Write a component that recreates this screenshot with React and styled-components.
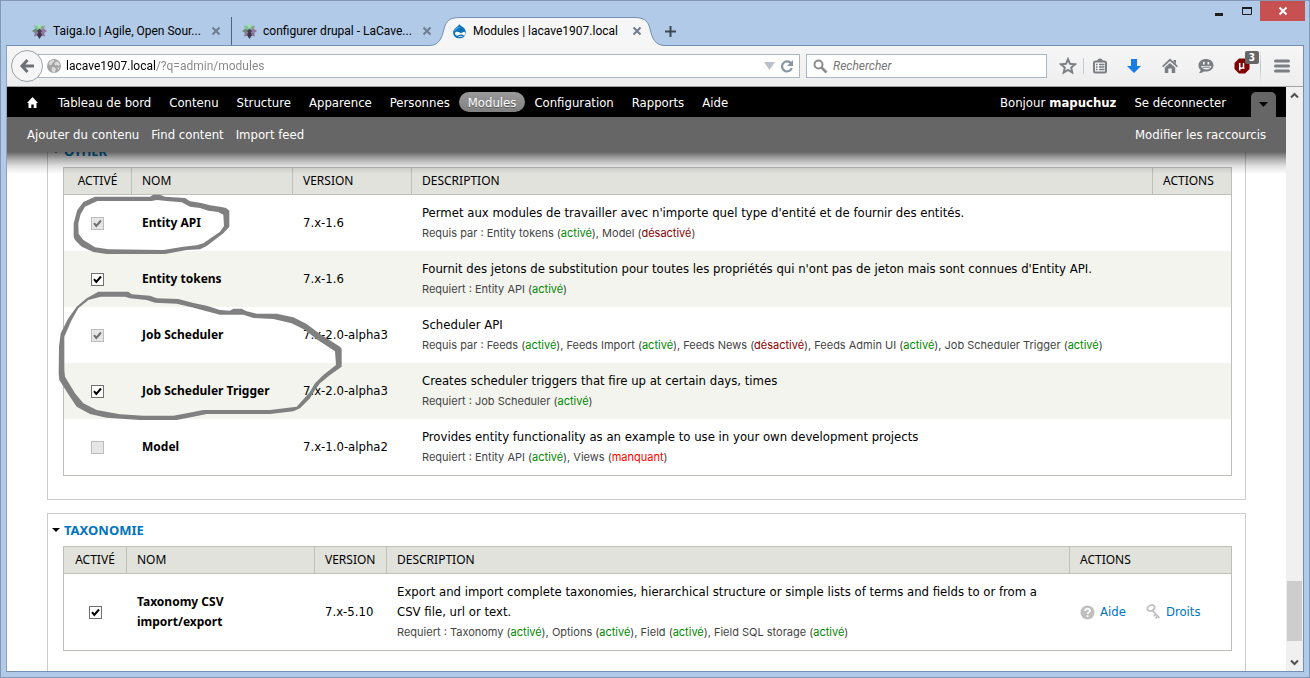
import React from "react";
import styled, { createGlobalStyle, css } from "styled-components";

const chromeFont = `Roboto, "Open Sans", sans-serif`;
const headingFont = `"Noto Sans", "Open Sans", sans-serif`;
const bodyFont = `"DejaVu Sans Condensed", "DejaVu Sans", sans-serif`;
const noteFont = `Inter, "Noto Sans", sans-serif`;

const GlobalStyle = createGlobalStyle`
  *, *::before, *::after { box-sizing: border-box; }
  html, body { margin: 0; padding: 0; height: 100%; overflow: hidden; }
  body { font-family: ${bodyFont}; font-size: 13px; color: #000; }
  button { font: inherit; border: 0; padding: 0; background: none; color: inherit; }
  a { color: inherit; text-decoration: none; }
  svg { display: block; flex: none; }
`;

/* ---------- Browser window ---------- */

const Shell = styled.div`
  display: flex;
  flex-direction: column;
  height: 100vh;
  padding: 0 5px 5px;
  border: 1px solid #8498b6;
  background: #b0cae8;
`;

const TitleBar = styled.header`
  display: flex;
  justify-content: space-between;
  height: 44px;
  flex: none;
  margin-right: -1px;
  font-family: ${chromeFont};
`;

const TabStrip = styled.div`
  display: flex;
  align-items: flex-end;
  padding-left: 16px;
`;

const Tab = styled.div`
  position: relative;
  display: flex;
  align-items: center;
  width: 210px;
  height: 28px;
  padding: 0 10px;
  font-size: 12px;
  border-right: ${(p) => (p.$divided ? "1px solid #51647d" : "0")};
`;

const TabShape = styled.svg`
  position: absolute;
  left: -12px;
  top: 0;
  z-index: 0;
`;

const TabLink = styled.a`
  position: relative;
  display: flex;
  align-items: center;
  gap: 6px;
  flex: 1;
  min-width: 0;
  white-space: nowrap;
`;

const TabClose = styled.button`
  position: relative;
  width: 10px;
  height: 10px;
`;

const NewTab = styled.button`
  display: grid;
  place-items: center;
  width: 36px;
  height: 28px;
`;

const WindowControls = styled.div`
  display: flex;
  align-items: flex-start;
`;

const WindowButton = styled.button`
  display: grid;
  place-items: center;
  width: ${(p) => (p.$danger ? 45 : 27)}px;
  height: 20px;
  background: ${(p) => (p.$danger ? "#c75050" : "transparent")};
`;

const Frame = styled.div`
  display: flex;
  flex-direction: column;
  flex: 1;
  min-height: 0;
  border: 1px solid #7590b0;
  border-left-color: #8ba3c2;
  background: #fff;
`;

const NavBar = styled.div`
  display: flex;
  align-items: center;
  height: 41px;
  flex: none;
  padding-left: 4px;
  border-bottom: 1px solid #a3a3a3;
  background: linear-gradient(#f6f6f6, #eee);
  font-family: ${chromeFont};
  font-size: 12px;
`;

const BackButton = styled.button`
  position: relative;
  z-index: 1;
  display: grid;
  place-items: center;
  width: 32px;
  height: 32px;
  border: 1px solid #9da3aa;
  border-radius: 50%;
  background: #f6f6f6;
`;

const Field = styled.label`
  display: flex;
  align-items: center;
  gap: 5px;
  height: 24px;
  border: 1px solid #aab6c3;
  background: #fff;
  ${(p) =>
    p.$wide
      ? css`
          flex: 1;
          margin-left: -5px;
          padding: 0 5px 0 8px;
        `
      : css`
          width: 241px;
          margin: 0 6px;
          padding: 0 6px;
        `}
`;

const FieldInput = styled.input`
  flex: 1;
  min-width: 0;
  height: 20px;
  padding: 0;
  border: 0;
  outline: 0;
  background: none;
  font: inherit;
  &::placeholder {
    color: #777;
    font-style: italic;
    opacity: 1;
  }
`;

const UrlInput = styled(FieldInput)`
  color: transparent;
  background: linear-gradient(90deg, #000 90px, #858585 90px);
  background-clip: text;
  -webkit-background-clip: text;
`;

const Tools = styled.div`
  display: flex;
  align-items: center;
`;

const toolWidths = { narrow: 30, medium: 32, wide: 42 };

const ToolButton = styled.button`
  position: relative;
  display: grid;
  place-items: center;
  width: ${(p) => toolWidths[p.$size] || 36}px;
  height: 30px;
`;

const Divider = styled.span`
  width: 1px;
  height: ${(p) => (p.$tall ? 36 : 16)}px;
  background: ${(p) => (p.$tall ? "linear-gradient(transparent, #b4bfcb, transparent)" : "#c3cbd3")};
`;

const Count = styled.span`
  position: absolute;
  top: 0;
  right: 1px;
  width: 14px;
  height: 13px;
  border-radius: 2px;
  background: #666;
  color: #fff;
  font: bold 10px/13px ${bodyFont};
  text-align: center;
`;

const Viewport = styled.div`
  display: flex;
  flex: 1;
  min-height: 0;
`;

const Page = styled.div`
  position: relative;
  flex: 1;
  min-width: 0;
  overflow: hidden;
`;

const ScrollBar = styled.div`
  display: flex;
  flex-direction: column;
  align-items: center;
  width: 17px;
  background: #f0f0f0;
`;

const ScrollArrow = styled.button`
  display: grid;
  place-items: center;
  width: 17px;
  height: 17px;
`;

const TrackSpace = styled.div`
  flex: ${(p) => p.$share};
`;

const Thumb = styled.div`
  width: 15px;
  height: 60px;
  background: #cdcdcd;
`;

/* ---------- Administration toolbar ---------- */

const AdminToolbar = styled.div`
  position: absolute;
  inset: 0 0 auto;
  z-index: 2;
  font-size: 13px;
  color: #fff;
`;

const MenuBar = styled.nav`
  display: flex;
  justify-content: space-between;
  height: 30px;
  padding: 0 10px;
  background: #000;
`;

const ShortcutBar = styled.nav`
  display: flex;
  justify-content: space-between;
  align-items: center;
  height: 35px;
  padding: 0 20px;
  background: #666;
`;

const ShadowEdge = styled.div`
  height: 22px;
  background: linear-gradient(rgba(0, 0, 0, 0.6), rgba(0, 0, 0, 0.33) 7px, rgba(0, 0, 0, 0.12) 14px, transparent);
  pointer-events: none;
`;

const LinkGroup = styled.div`
  display: flex;
  align-items: center;
  gap: ${(p) => p.$gap || 0}px;
`;

const MenuLink = styled.a`
  display: flex;
  align-items: center;
  gap: 4px;
  height: 20px;
  padding: 0 9px;
  border-radius: 10px;
  ${(p) =>
    p.$active &&
    css`
      background: linear-gradient(#9a9a9a, #808080);
      text-shadow: 0 1px 0 #555;
    `}
`;

const HomeLink = styled(MenuLink)`
  padding: 0 11px 0 10px;
`;

const DrawerToggle = styled.button`
  align-self: flex-end;
  display: grid;
  place-items: center;
  width: 25px;
  height: 25px;
  margin-left: 16px;
  border-radius: 5px 5px 0 0;
  background: #666;
`;

/* ---------- Module list ---------- */

const Main = styled.main`
  padding: 47px 40px 0;
`;

const Package = styled.section`
  position: relative;
  margin-bottom: 13px;
  padding: 0 13px 23px 15px;
  border: 1px solid #ccc;
`;

const PackageTitle = styled.h2`
  height: 32px;
  margin: 0 0 0 -11px;
  font: bold 13px/32px ${headingFont};
  text-transform: uppercase;
  color: #0074bd;
  a {
    display: flex;
    align-items: center;
    gap: 4px;
  }
`;

const ModuleTable = styled.table`
  width: 100%;
  table-layout: fixed;
  border-collapse: separate;
  border-spacing: 0;
  border: 1px solid #bebfb9;
  line-height: 20px;
`;

const HeadCell = styled.th`
  height: 27px;
  padding: 0 10px;
  border-bottom: 1px solid #bebfb9;
  border-right: 1px solid #bebfb9;
  background: #e1e2dc;
  font-family: ${headingFont};
  font-size: 12px;
  font-weight: normal;
  text-align: ${(p) => (p.$center ? "center" : "left")};
  text-transform: uppercase;
  &:last-child {
    border-right: 0;
  }
  &:first-child {
    padding: 0;
  }
`;

const Row = styled.tr`
  &:nth-child(even) {
    background: #f3f4ee;
  }
`;

const Cell = styled.td`
  padding: 8px 10px;
  vertical-align: middle;
  overflow-wrap: break-word;
`;

const TickCell = styled(Cell)`
  padding: 0 1px 0 0;
`;

const ModuleName = styled.label`
  font: bold 12px/20px ${headingFont};
`;

const Requirement = styled.div`
  font-family: ${noteFont};
  font-size: 11px;
  line-height: 20px;
  color: #444;
`;

const stateColors = { "activé": "#080", "désactivé": "#800", manquant: "#f00" };

const State = styled.span`
  color: ${(p) => stateColors[p.$state]};
`;

const Tick = styled.span`
  display: grid;
  width: 13px;
  height: 13px;
  margin: 0 auto;
  > * {
    grid-area: 1 / 1;
  }
  svg {
    pointer-events: none;
  }
`;

const TickInput = styled.input`
  appearance: none;
  width: 13px;
  height: 13px;
  margin: 0;
  border: 1px solid #707070;
  background: #fff;
  &:disabled {
    border-color: #bcbcbc;
    background: #e6e6e6;
  }
`;

const Actions = styled.div`
  display: flex;
  gap: 20px;
  color: #0074bd;
  a {
    display: flex;
    align-items: center;
    gap: 5px;
  }
`;

const PenMarks = styled.svg`
  position: absolute;
  left: -8px;
  top: 55px;
  pointer-events: none;
`;

/* ---------- Icons ---------- */

const TaigaIcon = () => (
  <svg width="15" height="16" viewBox="0 0 15 16">
    <path d="M7.5 0 10 3.5 7.5 7 5 3.5z" fill="#9fe3ad" />
    <path d="M2 2.5 6 3.2 7 7 3 6z" fill="#7fc690" />
    <path d="M13 2.5 9 3.2 8 7 12 6z" fill="#8fa58f" />
    <path d="M0 8 3.6 5.6 7.5 8 3.6 10.4z" fill="#6f8a77" />
    <path d="M15 8 11.4 5.6 7.5 8 11.4 10.4z" fill="#9277a0" />
    <path d="M2 13.5 3 9.6 7 9 6 12.6z" fill="#8c7b9b" />
    <path d="M13 13.5 12 9.6 8 9 9 12.6z" fill="#8b719b" />
    <path d="M7.5 16 10 12 7.5 7 5 12z" fill="#3c3648" />
    <path d="M7.5 5.5 10 8 7.5 11 5 8z" fill="#453f55" />
  </svg>
);

const DrupalIcon = () => (
  <svg width="15" height="16" viewBox="0 0 16 16">
    <path d="M7.6.3C8 1.8 9.4 2.4 10.8 3.3 13.3 4.9 14.8 7 14.8 9.6c0 3.700-3 6.200-6.800 6.200S1.200 13.200 1.200 9.500c0-2.900 1.900-4.600 3.900-5.900C6.500 2.700 7.500 2 7.600.3z" fill="#0a72b8" />
    <path d="M3 5.500C4.600 3.600 7 4 9.500 3.500 6.500 6 3.500 6.500 2 9c-.3-1.500.2-2.600 1-3.500z" fill="#4ba0d8" />
    <path d="M5.700 8.700c2 0 3 1.500 4 1.500s2-1.400 3.200-1.400c1 0 1.500 1 1.500 2s-.7 2-1.700 2-2-1.300-3.100-1.300-1.900 1.300-3.600 1.300-2.800-.9-2.800-2.200.9-1.900 2.500-1.900z" fill="#fff" />
    <path d="M7 14.300c1.500-.8 3-.8 4.200-.1" stroke="#fff" fill="none" />
  </svg>
);

const CrossIcon = ({ color = "#6f7d8c" }) => (
  <svg width="10" height="10" viewBox="0 0 10 10">
    <path d="M1.500 1.500l7 7M8.500 1.500l-7 7" stroke={color} strokeWidth="2" />
  </svg>
);

const GlobeIcon = () => (
  <svg width="14" height="14" viewBox="0 0 14 14">
    <circle cx="7" cy="7" r="7" fill="#a3a3a3" />
    <path d="M1.500 4.500 4 1.600 7 1l.5 1.500-2 1L5 5.500 3 6.500zM8.500 3l2.500-.5 2 3-1 1.500-2-1-2 .5-.5-1.800zM5 8l3 .5 1 2-1.500 3h-1.500L4.500 11zM10.500 8.500l2 0-1.500 3z" fill="#dcdcdc" />
  </svg>
);

const StarIcon = () => (
  <svg width="18" height="18" viewBox="0 0 18 18">
    <path d="M9 2.200l2 4.600 5 .5-3.800 3.300 1.100 4.900L9 13l-4.300 2.500 1.100-4.900L2 7.300l5-.5z" fill="none" stroke="#7b7f84" strokeWidth="2" />
  </svg>
);

const ListIcon = () => (
  <svg width="16" height="16" viewBox="0 0 16 16">
    <path d="M4.500 3C5.500 2.500 6 .5 8 .5s2.500 2 3.500 2.500z" fill="#7b7f84" />
    <rect x="2" y="3.500" width="12" height="11" rx="1.500" fill="none" stroke="#7b7f84" strokeWidth="2" />
    <path d="M4 6.500h1.500M7 6.500h5.500M4 9h1.500M7 9h5.500M4 11.500h1.500M7 11.500h5.500" stroke="#7b7f84" strokeWidth="1.400" />
  </svg>
);

const DownloadIcon = () => (
  <svg width="16" height="16" viewBox="0 0 16 16">
    <path d="M5 1h6v7h4l-7 7-7-7h4z" fill="#177ee6" />
  </svg>
);

const HomeIcon = () => (
  <svg width="16" height="16" viewBox="0 0 16 16">
    <path d="M.7 8.600 8 1.800l7.300 6.800" fill="none" stroke="#7b7f84" strokeWidth="1.800" />
    <path d="M11.500 2H14v4l-2.500-2.200zM2.800 9.500 8 4.900 13.200 9.500V15H9.700v-4.500H6.300V15H2.800z" fill="#7b7f84" />
  </svg>
);

const ChatIcon = () => (
  <svg width="16" height="16" viewBox="0 0 16 16">
    <path d="M8 1c4.400 0 7.500 2.700 7.500 6.300S12.400 13.600 8 13.600c-.8 0-1.500 0-2.200-.2C4.600 14.700 2.800 15 1 15c1-.8 1.600-1.800 1.500-2.900C1.300 11 .5 9.300.5 7.300.5 3.700 3.600 1 8 1z" fill="#7b7f84" />
    <path d="M5 4h1.700v2.500H5zM9.500 4h1.700v2.500H9.500zM3 8h10.500c-.5 2.300-2.600 3.500-5 3.500S3.500 10.300 3 8z" fill="#f2f2f2" />
    <path d="M4.500 9.300h7.500" stroke="#7b7f84" />
  </svg>
);

const BlockerIcon = () => (
  <svg width="16" height="16" viewBox="0 0 16 16">
    <path d="M5 .5h6L15.500 5v6L11 15.500H5L.5 11V5z" fill="#800000" />
    <path d="M5.700 12.500V5v3.500c0 2.300 3.800 2.300 3.800 0V5v4.500c0 .6.400.9 1 .8" fill="none" stroke="#fff" strokeWidth="1.500" />
  </svg>
);

const MenuIcon = () => (
  <svg width="16" height="14" viewBox="0 0 16 14">
    <path d="M1.500 2h13M1.500 7h13M1.500 12h13" stroke="#7b7f84" strokeWidth="3" strokeLinecap="round" />
  </svg>
);

const TriangleDown = ({ width = 9, height = 5, color = "#000" }) => (
  <svg width={width} height={height} viewBox="0 0 10 6" preserveAspectRatio="none">
    <path d="M0 0h10L5 6z" fill={color} />
  </svg>
);

const Chevron = ({ up }) => (
  <svg width="9" height="7" viewBox="0 0 9 7">
    <path d={up ? "M1 5.500 4.500 2 8 5.500" : "M1 1.500 4.500 5 8 1.500"} fill="none" stroke="#505050" strokeWidth="2" />
  </svg>
);

const HelpIcon = () => (
  <svg width="15" height="15" viewBox="0 0 15 15">
    <circle cx="7.500" cy="7.500" r="7" fill="#bfbfbf" />
    <path d="M5.200 6c0-3.200 4.800-3 4.700-.2 0 1.700-2.300 1.700-2.300 3.300M7.600 10.300v1.800" fill="none" stroke="#fff" strokeWidth="1.800" />
  </svg>
);

const KeyIcon = () => (
  <svg width="15" height="16" viewBox="0 0 15 16">
    <ellipse cx="5" cy="4" rx="3.700" ry="2.700" transform="rotate(-25 5 4)" fill="none" stroke="#bfbfbf" strokeWidth="1.800" />
    <path d="M6.500 6.500 13.500 14M9.500 14.500l2.500-3M7.800 12l2.200-2.200" fill="none" stroke="#bfbfbf" strokeWidth="1.800" />
  </svg>
);

/* ---------- Data ---------- */

const menuItems = ["Tableau de bord", "Contenu", "Structure", "Apparence", "Personnes", "Modules", "Configuration", "Rapports", "Aide"];
const shortcuts = ["Ajouter du contenu", "Find content", "Import feed"];

const ON = "activé";
const OFF = "désactivé";
const MISSING = "manquant";

const packages = [
  {
    title: "Other",
    widths: [68, 161, 119, null, 78],
    marked: true,
    modules: [
      { name: "Entity API", version: "7.x-1.6", checked: true, locked: true, text: "Permet aux modules de travailler avec n'importe quel type d'entité et de fournir des entités.", relation: "Requis par", links: [["Entity tokens", ON], ["Model", OFF]] },
      { name: "Entity tokens", version: "7.x-1.6", checked: true, text: "Fournit des jetons de substitution pour toutes les propriétés qui n'ont pas de jeton mais sont connues d'Entity API.", relation: "Requiert", links: [["Entity API", ON]] },
      { name: "Job Scheduler", version: "7.x-2.0-alpha3", checked: true, locked: true, text: "Scheduler API", relation: "Requis par", links: [["Feeds", ON], ["Feeds Import", ON], ["Feeds News", OFF], ["Feeds Admin UI", ON], ["Job Scheduler Trigger", ON]] },
      { name: "Job Scheduler Trigger", version: "7.x-2.0-alpha3", checked: true, text: "Creates scheduler triggers that fire up at certain days, times", relation: "Requiert", links: [["Job Scheduler", ON]] },
      { name: "Model", version: "7.x-1.0-alpha2", checked: false, locked: true, text: "Provides entity functionality as an example to use in your own development projects", relation: "Requiert", links: [["Entity API", ON], ["Views", MISSING]] },
    ],
  },
  {
    title: "Taxonomie",
    widths: [63, 188, 72, null, 161],
    modules: [
      { name: "Taxonomy CSV import/export", version: "7.x-5.10", checked: true, actions: true, text: "Export and import complete taxonomies, hierarchical structure or simple lists of terms and fields to or from a CSV file, url or text.", relation: "Requiert", links: [["Taxonomy", ON], ["Options", ON], ["Field", ON], ["Field SQL storage", ON]] },
    ],
  },
];

/* ---------- Parts ---------- */

function BrowserTab({ icon, title, active, divided }) {
  return (
    <Tab $divided={divided}>
      {active && (
        <TabShape width="234" height="29" viewBox="0 0 234 29">
          <path d="M0 28.500C9 28 12 21 14 12 16 3 21 .5 30 .5H204C213 .5 218 3 220 12 222 21 225 28 234 28.500V29H0z" fill="#f6f6f6" />
          <path d="M0 28.500C9 28 12 21 14 12 16 3 21 .5 30 .5H204C213 .5 218 3 220 12 222 21 225 28 234 28.500" fill="none" stroke="#7590b0" />
        </TabShape>
      )}
      <TabLink href="#">
        {icon}
        {title}
      </TabLink>
      <TabClose aria-label="Fermer l'onglet">
        <CrossIcon />
      </TabClose>
    </Tab>
  );
}

function ModuleRow({ module }) {
  const id = module.name.toLowerCase().replace(/[^a-z]+/g, "-");
  return (
    <Row>
      <TickCell>
        <Tick>
          <TickInput id={id} type="checkbox" defaultChecked={module.checked} disabled={module.locked} />
          {module.checked && (
            <svg width="13" height="13" viewBox="0 0 13 13">
              <path d="M3 6.200 5.300 9 10 3.500" fill="none" stroke={module.locked ? "#707070" : "#000"} strokeWidth="2" />
            </svg>
          )}
        </Tick>
      </TickCell>
      <Cell>
        <ModuleName htmlFor={id}>{module.name}</ModuleName>
      </Cell>
      <Cell>{module.version}</Cell>
      <Cell>
        {module.text}
        <Requirement>
          {module.relation} :{" "}
          {module.links.map(([name, state], i) => (
            <React.Fragment key={name}>
              {i > 0 && ", "}
              {name} (<State $state={state}>{state}</State>)
            </React.Fragment>
          ))}
        </Requirement>
      </Cell>
      <Cell>
        {module.actions && (
          <Actions>
            <a href="#"><HelpIcon />Aide</a>
            <a href="#"><KeyIcon />Droits</a>
          </Actions>
        )}
      </Cell>
    </Row>
  );
}

function ModulePackage({ pack }) {
  return (
    <Package>
      <PackageTitle>
        <a href="#">
          <TriangleDown width={8} height={4} />
          {pack.title}
        </a>
      </PackageTitle>
      <ModuleTable>
        <colgroup>
          {pack.widths.map((w, i) => (
            <col key={i} width={w || undefined} />
          ))}
        </colgroup>
        <thead>
          <tr>
            <HeadCell $center>Activé</HeadCell>
            <HeadCell>Nom</HeadCell>
            <HeadCell>Version</HeadCell>
            <HeadCell>Description</HeadCell>
            <HeadCell>Actions</HeadCell>
          </tr>
        </thead>
        <tbody>
          {pack.modules.map((m) => (
            <ModuleRow key={m.name} module={m} />
          ))}
        </tbody>
      </ModuleTable>
      {pack.marked && (
        <PenMarks width="370" height="240" viewBox="0 0 1110 720">
          <path
            fill="#808080"
            fillRule="evenodd"
            d="M165 20 330 20 340 14 360 14 375 20 435 24 450 34 480 38 510 46 540 50 558 54 568 62V110L550 130 500 168 480 178 440 180 375 192 200 192 160 186 125 170 105 150 101 140V100L112 60 130 36zM172 33 335 33 350 30 380 33 425 37 450 50 480 54 505 62 535 66 550 74 552 108 540 125 490 160 470 166 430 170 370 180 205 178 165 172 130 150 116 132 115 100 122 72 135 50z"
          />
          <path
            fill="#808080"
            fillRule="evenodd"
            d="M175 305 265 305 275 313 330 317 350 325 415 327 460 339 500 347 540 360 570 362 580 356 605 356 620 364 650 371 710 371 760 382 800 402 840 432 900 470 905 476V530L870 555 840 580 825 600 810 625 780 655 760 664 690 672 500 672 460 680 410 690 300 690 200 683 150 672 110 650 90 620 58 570 56 550 57 470 62 430 85 385 110 350 140 325zM182 320 255 320 270 325 320 330 345 338 410 341 455 352 500 364 540 374 610 374 640 384 700 387 755 400 795 420 830 448 885 484 888 525 850 555 825 580 808 608 770 650 690 660 490 660 440 670 400 677 310 677 240 673 170 660 130 640 105 610 75 560 73 540V440L95 390 115 355 145 330z"
          />
        </PenMarks>
      )}
    </Package>
  );
}

export default function App() {
  return (
    <Shell>
      <GlobalStyle />
      <TitleBar>
        <TabStrip>
          <BrowserTab icon={<TaigaIcon />} title="Taiga.Io | Agile, Open Sour..." divided />
          <BrowserTab icon={<TaigaIcon />} title="configurer drupal - LaCave..." />
          <BrowserTab icon={<DrupalIcon />} title="Modules | lacave1907.local" active />
          <NewTab aria-label="Nouvel onglet">
            <svg width="11" height="11" viewBox="0 0 11 11">
              <path d="M5.500 0v11M0 5.500h11" stroke="#3c4650" strokeWidth="2" />
            </svg>
          </NewTab>
        </TabStrip>
        <WindowControls>
          <WindowButton aria-label="Réduire">
            <svg width="9" height="11" viewBox="0 0 9 11"><path d="M0 8.500h8" stroke="#1e1e1e" strokeWidth="3" /></svg>
          </WindowButton>
          <WindowButton aria-label="Agrandir">
            <svg width="10" height="8" viewBox="0 0 10 8"><path d="M.5 1.500V7.500H9.500V1.500M0 1h10" fill="none" stroke="#1e1e1e" strokeWidth="1" /><path d="M0 1h10" stroke="#1e1e1e" strokeWidth="2" /></svg>
          </WindowButton>
          <WindowButton $danger aria-label="Fermer">
            <CrossIcon color="#fff" />
          </WindowButton>
        </WindowControls>
      </TitleBar>
      <Frame>
        <NavBar>
          <BackButton aria-label="Page précédente">
            <svg width="16" height="16" viewBox="0 0 16 16">
              <path d="M8.500 2 3 8l5.500 6M3 8h12" fill="none" stroke="#6d7176" strokeWidth="3" />
            </svg>
          </BackButton>
          <Field $wide>
            <GlobeIcon />
            <UrlInput aria-label="Adresse" defaultValue="lacave1907.local/?q=admin/modules" />
            <TriangleDown width={11} height={8} color="#b9c2cb" />
            <svg width="14" height="14" viewBox="0 0 14 14">
              <path d="M11 4.300A5 5 0 1 0 11.800 9" fill="none" stroke="#8796a5" strokeWidth="2.200" />
              <path d="M13 1v6H7z" fill="#8796a5" />
            </svg>
          </Field>
          <Field>
            <svg width="15" height="15" viewBox="0 0 15 15">
              <circle cx="5.500" cy="5.500" r="4" fill="none" stroke="#8c8c8c" strokeWidth="2" />
              <path d="M8.500 8.500l5 5" stroke="#8c8c8c" strokeWidth="2.600" />
            </svg>
            <FieldInput aria-label="Rechercher" placeholder="Rechercher" />
          </Field>
          <Tools>
            <ToolButton $size="narrow" aria-label="Marque-page"><StarIcon /></ToolButton>
            <Divider />
            <ToolButton $size="medium" aria-label="Liste"><ListIcon /></ToolButton>
            <ToolButton aria-label="Téléchargements"><DownloadIcon /></ToolButton>
            <ToolButton aria-label="Accueil"><HomeIcon /></ToolButton>
            <ToolButton aria-label="Discussion"><ChatIcon /></ToolButton>
            <ToolButton aria-label="Bloqueur"><BlockerIcon /><Count>3</Count></ToolButton>
            <Divider $tall />
            <ToolButton $size="wide" aria-label="Menu"><MenuIcon /></ToolButton>
          </Tools>
        </NavBar>
        <Viewport>
          <Page>
            <AdminToolbar>
              <MenuBar>
                <LinkGroup>
                  <HomeLink href="#" aria-label="Accueil">
                    <svg width="11" height="11" viewBox="0 0 11 11">
                      <path d="M5.500 0 11 6H9.500v5H6.700V7.500H4.300V11H1.500V6H0z" fill="#fff" />
                    </svg>
                  </HomeLink>
                  {menuItems.map((t) => (
                    <MenuLink href="#" key={t} $active={t === "Modules"}>{t}</MenuLink>
                  ))}
                </LinkGroup>
                <LinkGroup>
                  <MenuLink href="#">Bonjour <strong>mapuchuz</strong></MenuLink>
                  <MenuLink href="#">Se déconnecter</MenuLink>
                  <DrawerToggle aria-label="Afficher les raccourcis"><TriangleDown width={9} height={5} /></DrawerToggle>
                </LinkGroup>
              </MenuBar>
              <ShortcutBar>
                <LinkGroup $gap={12}>
                  {shortcuts.map((t) => (
                    <a href="#" key={t}>{t}</a>
                  ))}
                </LinkGroup>
                <LinkGroup>
                  <a href="#">Modifier les raccourcis</a>
                </LinkGroup>
              </ShortcutBar>
              <ShadowEdge />
            </AdminToolbar>
            <Main>
              {packages.map((p) => (
                <ModulePackage key={p.title} pack={p} />
              ))}
            </Main>
          </Page>
          <ScrollBar>
            <ScrollArrow aria-label="Défiler vers le haut"><Chevron up /></ScrollArrow>
            <TrackSpace $share={477} />
            <Thumb />
            <TrackSpace $share={13} />
            <ScrollArrow aria-label="Défiler vers le bas"><Chevron /></ScrollArrow>
          </ScrollBar>
        </Viewport>
      </Frame>
    </Shell>
  );
}
